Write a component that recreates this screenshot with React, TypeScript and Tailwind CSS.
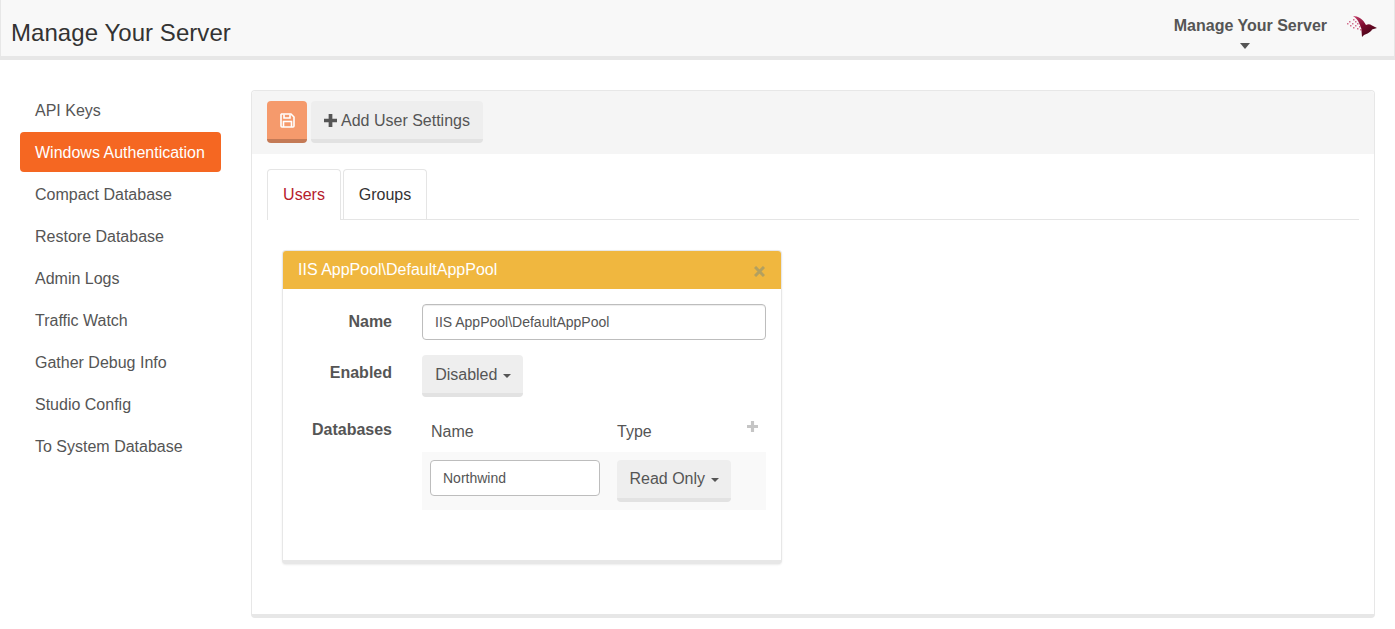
const navItems = [
  "API Keys",
  "Windows Authentication",
  "Compact Database",
  "Restore Database",
  "Admin Logs",
  "Traffic Watch",
  "Gather Debug Info",
  "Studio Config",
  "To System Database",
];

const specks = [
  [1, 8], [3, 6], [4, 10], [6, 8], [7, 4], [7, 12], [9, 6], [9, 10], [11, 8], [11, 13],
  [12, 4], [13, 11], [14, 7], [14, 14],
];

function Logo() {
  return (
    <svg width="32" height="23" viewBox="0 0 32 23" className="block">
      <defs>
        <linearGradient id="bird" x1="0" y1="0" x2="0.7" y2="1">
          <stop offset="0" stopColor="#c8406c" />
          <stop offset="0.5" stopColor="#7d0a2e" />
          <stop offset="1" stopColor="#3f0514" />
        </linearGradient>
      </defs>
      {specks.map(([x, y], i) => (
        <rect key={i} x={x} y={y} width="1.500" height="1.500" fill="#d4708f" />
      ))}
      <path
        d="M7 1 C12 1 17 4 20 10 C22 9 24 9 26 10.500 L31 13 L26 14.500 C25 17 21 19 18 20 L16 22 L15.500 16 C16 13 14 11 13 8 C12 5 10 3 7 1 Z"
        fill="url(#bird)"
      />
    </svg>
  );
}

function PlusIcon({ className }: { className: string }) {
  return (
    <svg viewBox="0 0 14 14" className={className} fill="currentColor">
      <path d="M5 0h4v5h5v4H9v5H5V9H0V5h5z" />
    </svg>
  );
}

function SaveIcon() {
  return (
    <svg viewBox="0 0 15 15" className="w-[15px] h-[15px]" fill="none" stroke="currentColor" strokeWidth="1.600">
      <path d="M1.500 1h9.500l3 3v9a1 1 0 0 1-1 1H2a1 1 0 0 1-1-1V1.500z" />
      <path d="M4 1.500v3.500h6V1.500M3.500 14V8.500h8V14" />
    </svg>
  );
}

function CloseIcon() {
  return (
    <svg viewBox="0 0 11 11" className="w-[11px] h-[11px] mt-[3px] text-[#b3a05f]" stroke="currentColor" strokeWidth="3">
      <path d="M1 1l9 9M10 1l-9 9" />
    </svg>
  );
}

function Caret() {
  return (
    <span className="inline-block w-0 h-0 ml-[1px] border-x-4 border-x-transparent border-t-4 border-t-[#555] align-middle" />
  );
}

export default function App() {
  return (
    <div className="min-h-[629px] bg-white text-[16px] text-[#555] overflow-hidden font-['Liberation_Sans',Arial,sans-serif]">
      <header className="h-[60px] bg-[#f8f8f8] border-l border-r border-[#e7e7e7] border-b-4 flex justify-between">
        <h1 className="text-[24px] leading-[26px] tracking-[0.06px] text-[#333] pl-[10px] pt-[20px]">Manage Your Server</h1>
        <div className="flex items-start">
          <div className="flex flex-col items-center pt-[17px]">
            <span className="font-bold leading-[18px] text-[#555]">Manage Your Server</span>
            <span className="w-0 h-0 mt-[8px] mr-[10px] border-x-[5px] border-x-transparent border-t-[6px] border-t-[#555]" />
          </div>
          <div className="ml-[19px] mr-[16px] mt-[15px]">
            <Logo />
          </div>
        </div>
      </header>

      <div className="flex pt-[30px] pl-[20px]">
        <nav className="w-[201px] mr-[30px] flex flex-col gap-[2px]">
          {navItems.map((item) => (
            <a
              key={item}
              className={`h-[40px] px-[15px] leading-[42px] rounded-[4px] ${
                item === "Windows Authentication" ? "bg-[#f56722] text-white" : "text-[#555]"
              }`}
            >
              {item}
            </a>
          ))}
        </nav>

        <main className="w-[1124px] h-[528px] bg-white border border-[#e7e7e7] border-b-4 rounded-[4px]">
          <div className="h-[63px] bg-[#f5f5f5] px-[15px] pt-[10px] flex gap-[4px] rounded-t-[4px]">
            <button className="w-[40px] h-[42px] bg-[#f59a6c] border-b-4 border-[#c47a56] rounded-[4px] text-white flex items-center justify-center">
              <SaveIcon />
            </button>
            <button className="w-[172px] h-[42px] pt-[2px] bg-[#eeeeee] border-b-4 border-[#e2e2e2] rounded-[4px] text-[#555] flex items-center justify-center gap-[4px]">
              <PlusIcon className="w-[13px] h-[13px] mb-[2px]" />
              Add User Settings
            </button>
          </div>

          <div className="px-[15px] pt-[15px]">
            <div className="flex gap-[2px] h-[51px] border-b border-[#e5e5e5]">
              <div className="w-[74px] h-[51px] bg-white border border-[#e5e5e5] border-b-0 rounded-t-[4px] text-center leading-[50px] text-[#b5202c]">
                Users
              </div>
              <div className="w-[84px] h-[50px] border border-[#e5e5e5] border-b-0 rounded-t-[4px] text-center leading-[50px] text-[#333]">
                Groups
              </div>
            </div>

            <section className="w-[500px] h-[314px] mt-[30px] ml-[15px] bg-white border border-[#e7e7e7] border-b-4 rounded-[4px] shadow-[0_1px_2px_rgba(0,0,0,0.08)]">
              <div className="h-[38px] bg-[#f0b73f] rounded-t-[3px] flex items-center justify-between pl-[15px] pr-[16px] text-white">
                IIS AppPool\DefaultAppPool
                <CloseIcon />
              </div>

              <div className="pt-[15px] pr-[15px] flex flex-col">
                <div className="flex">
                  <label className="w-[109px] text-right font-bold leading-[36px]">Name</label>
                  <div className="ml-[30px] w-[344px] h-[36px] border border-[#bdbdbd] rounded-[4px] shadow-[inset_0_1px_1px_rgba(0,0,0,0.075)] pl-[12px] text-[14px] leading-[34px]">
                    IIS AppPool\DefaultAppPool
                  </div>
                </div>

                <div className="flex mt-[15px]">
                  <label className="w-[109px] text-right font-bold leading-[36px]">Enabled</label>
                  <button className="ml-[30px] w-[101px] h-[42px] pt-[2px] pl-[1px] bg-[#eeeeee] border-b-4 border-[#e2e2e2] rounded-[4px] text-[#555]">
                    Disabled <Caret />
                  </button>
                </div>

                <div className="flex mt-[15px]">
                  <label className="w-[109px] text-right font-bold leading-[36px]">Databases</label>
                  <div className="ml-[30px] w-[344px]">
                    <div className="relative h-[40px] flex leading-[40px]">
                      <span className="ml-[9px] w-[186px]">Name</span>
                      <span>Type</span>
                      <PlusIcon className="absolute right-[8px] top-[9px] w-[11px] h-[11px] text-[#c5c5c5]" />
                    </div>
                    <div className="h-[58px] bg-[#f9f9f9] pl-[8px] pt-[8px] flex">
                      <div className="w-[170px] h-[36px] bg-white border border-[#bdbdbd] rounded-[4px] pl-[12px] text-[14px] leading-[34px]">
                        Northwind
                      </div>
                      <button className="ml-[17px] w-[114px] h-[42px] bg-[#eeeeee] border-b-4 border-[#e2e2e2] rounded-[4px] text-[#555]">
                        Read Only <Caret />
                      </button>
                    </div>
                  </div>
                </div>
              </div>
            </section>
          </div>
        </main>
      </div>
    </div>
  );
}
